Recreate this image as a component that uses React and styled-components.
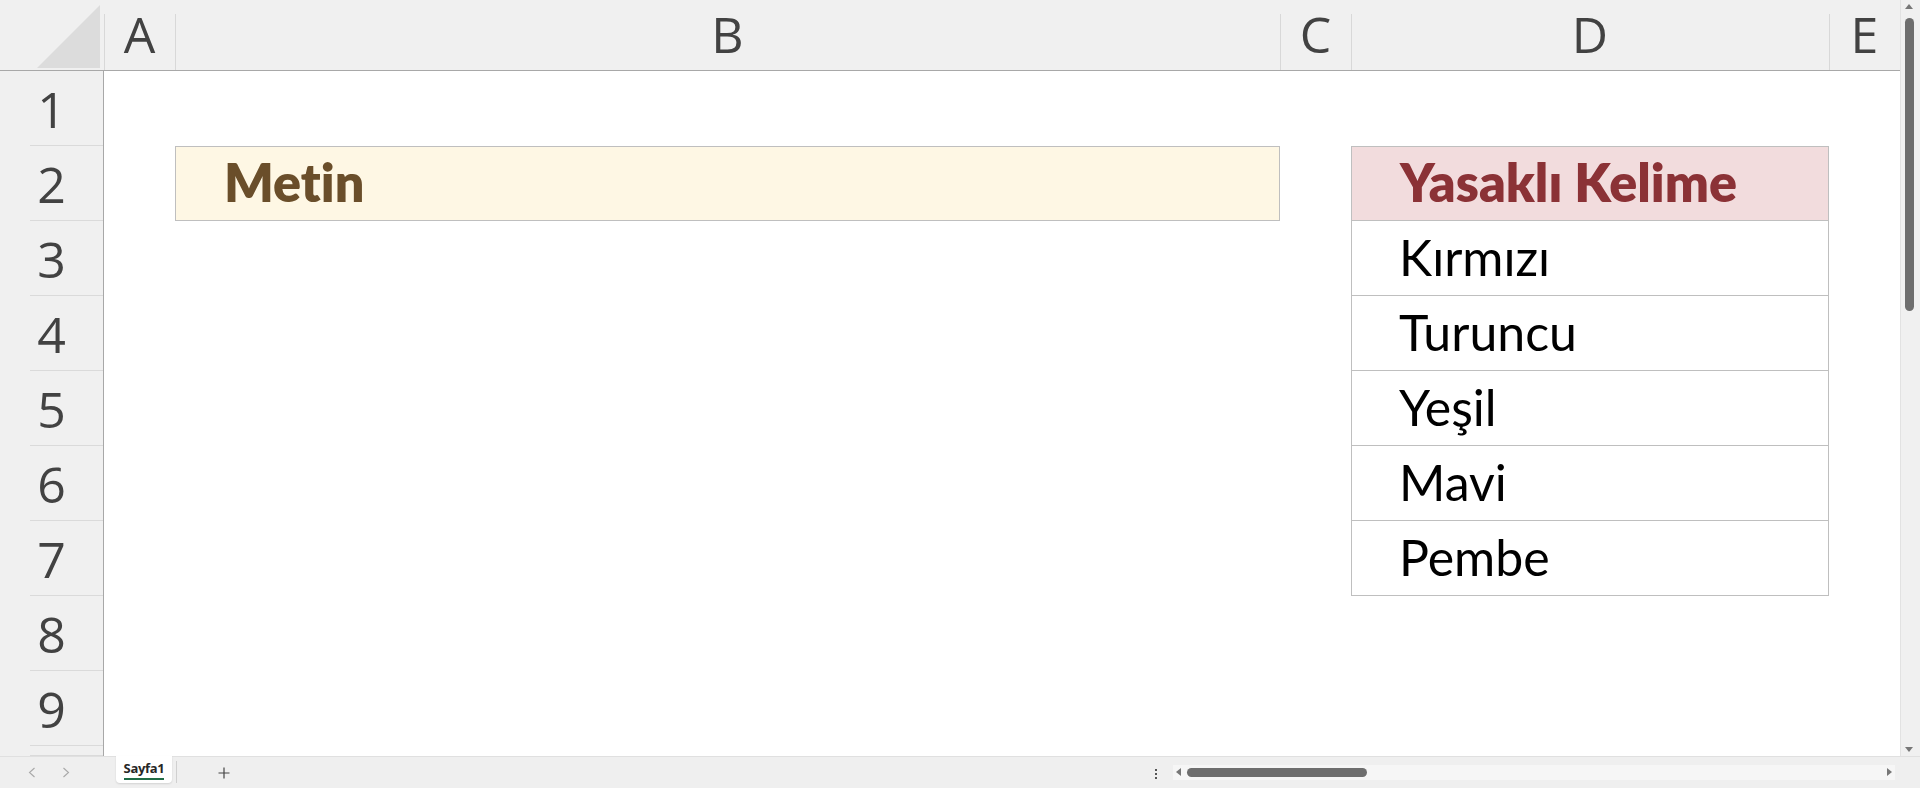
import React from 'react';
import styled, { createGlobalStyle } from 'styled-components';

const GlobalStyle = createGlobalStyle`
  html, body {
    margin: 0;
    padding: 0;
    background: #f0f0f0;
  }
  body {
    width: 1920px;
    height: 788px;
    overflow: hidden;
  }
`;

const Window = styled.div`
  width: 1920px;
  height: 788px;
  display: flex;
  flex-direction: column;
  background: #f0f0f0;
  overflow: hidden;
`;

const Main = styled.div`
  display: flex;
  height: 756px;
`;

const Sheet = styled.div`
  display: grid;
  grid-template-columns: 104px 71px 1105px 71px 478px 71px;
  grid-template-rows: 71px repeat(9, 75px) 10px;
  width: 1900px;
  height: 756px;
  overflow: hidden;
  background: #ffffff;
`;

const Corner = styled.div`
  position: relative;
  background: #f0f0f0;
  border-bottom: 1px solid #a8a8a8;
  box-sizing: border-box;

  &::before {
    content: '';
    position: absolute;
    left: 37px;
    top: 5px;
    width: 63px;
    height: 63px;
    background: #dcdcdc;
    clip-path: polygon(100% 0, 100% 100%, 0 100%);
  }
`;

const ColHeader = styled.div`
  position: relative;
  display: flex;
  align-items: center;
  justify-content: center;
  background: #f0f0f0;
  border-bottom: 1px solid #a8a8a8;
  box-sizing: border-box;
  font-family: 'Open Sans', 'Noto Sans', sans-serif;
  font-size: 50px;
  color: #424242;
  padding-bottom: 2px;

  &::before {
    content: '';
    position: absolute;
    left: 0;
    top: 14px;
    bottom: 0;
    width: 1px;
    background: #d8d8d8;
  }
`;

const RowHeader = styled.div`
  position: relative;
  display: flex;
  align-items: center;
  justify-content: center;
  background: #f0f0f0;
  border-right: 1px solid #a8a8a8;
  box-sizing: border-box;
  font-family: 'Open Sans', 'Noto Sans', sans-serif;
  font-size: 50px;
  color: #424242;

  &::after {
    content: '';
    position: absolute;
    left: 30px;
    right: 0;
    bottom: 0;
    height: 1px;
    background: #dadada;
  }
`;

const Cell = styled.div`
  display: flex;
  align-items: center;
  box-sizing: border-box;
  padding: 0 0 3px ${(p) => (p.$bold ? '48px' : '47px')};
  background: ${(p) => p.$fill || '#ffffff'};
  color: ${(p) => p.$color || '#000000'};
  font-family: Lato, 'Noto Sans', sans-serif;
  font-size: ${(p) => (p.$bold ? '52px' : '50px')};
  font-weight: ${(p) => (p.$bold ? 800 : 400)};
  font-variant-ligatures: none;
  white-space: nowrap;
  border-left: ${(p) => (p.$boxed ? '1px solid #bfbfbf' : 'none')};
  border-right: ${(p) => (p.$boxed ? '1px solid #bfbfbf' : 'none')};
  border-bottom: ${(p) => (p.$boxed ? '1px solid #bfbfbf' : 'none')};
  border-top: ${(p) => (p.$top ? '1px solid #bfbfbf' : 'none')};
`;

const VScroll = styled.div`
  position: relative;
  width: 20px;
  height: 756px;
  background: #f0f0f0;
  border-left: 1px solid #e2e2e2;
  box-sizing: border-box;
`;

const VThumb = styled.div`
  position: absolute;
  left: 4px;
  top: 18px;
  width: 9px;
  height: 293px;
  border-radius: 5px;
  background: #6e6e6e;
`;

const Arrow = styled.div`
  position: absolute;
  width: 0;
  height: 0;
  border-style: solid;
  ${(p) => p.$dir === 'up' && `
    left: 4px; top: 4px;
    border-width: 0 4.5px 5px 4.5px;
    border-color: transparent transparent #777 transparent;
  `}
  ${(p) => p.$dir === 'down' && `
    left: 4px; bottom: 4px;
    border-width: 5px 4.5px 0 4.5px;
    border-color: #777 transparent transparent transparent;
  `}
  ${(p) => p.$dir === 'left' && `
    left: 3px; top: 3px;
    border-width: 4.5px 5px 4.5px 0;
    border-color: transparent #777 transparent transparent;
  `}
  ${(p) => p.$dir === 'right' && `
    right: 3px; top: 3px;
    border-width: 4.5px 0 4.5px 5px;
    border-color: transparent transparent transparent #777;
  `}
`;

const BottomBar = styled.div`
  display: flex;
  align-items: flex-start;
  height: 32px;
  background: #efefef;
  border-top: 1px solid #e0e0e0;
  box-sizing: border-box;
`;

const NavGroup = styled.div`
  display: flex;
  align-items: center;
  gap: 26px;
  width: 116px;
  height: 31px;
  padding-left: 28px;
  box-sizing: border-box;
`;

const SheetTab = styled.div`
  display: flex;
  flex-direction: column;
  align-items: center;
  width: 56px;
  height: 27px;
  margin-top: -1px;
  background: #ffffff;
  border-radius: 0 0 4px 4px;
  box-shadow: 0 1px 2px rgba(0, 0, 0, 0.12);
  box-sizing: border-box;
  padding-top: 3px;
  font-family: 'Open Sans', sans-serif;
  font-size: 13px;
  font-weight: 700;
  letter-spacing: -0.3px;
  color: #262626;
`;

const TabUnderline = styled.div`
  width: 40px;
  height: 2px;
  margin-top: 1px;
  background: #1e6b45;
`;

const TabDivider = styled.div`
  width: 1px;
  height: 22px;
  margin: 4px 0 0 4px;
  background: #d0d0d0;
`;

const AddSheet = styled.div`
  display: flex;
  align-items: center;
  justify-content: center;
  width: 20px;
  height: 31px;
  margin-left: 37px;
`;

const Spacer = styled.div`
  flex: 1;
`;

const MoreDots = styled.div`
  display: flex;
  flex-direction: column;
  gap: 2px;
  margin: 12px 16px 0 0;

  span {
    width: 2px;
    height: 2px;
    background: #555;
  }
`;

const HTrack = styled.div`
  position: relative;
  width: 722px;
  height: 15px;
  margin: 8px 25px 0 0;
  background: #f6f6f6;
`;

const HThumb = styled.div`
  position: absolute;
  left: 14px;
  top: 3px;
  width: 180px;
  height: 9px;
  border-radius: 5px;
  background: #6e6e6e;
`;

const columns = ['A', 'B', 'C', 'D', 'E'];

const words = ['Kırmızı', 'Turuncu', 'Yeşil', 'Mavi', 'Pembe'];

const cellAt = (row, col) => {
  if (row === 2 && col === 'B') {
    return { text: 'Metin', $fill: '#fef7e4', $color: '#6a4e2a', $bold: true, $boxed: true, $top: true };
  }
  if (row === 2 && col === 'D') {
    return { text: 'Yasaklı Kelime', $fill: '#f2dcdd', $color: '#8b3236', $bold: true, $boxed: true, $top: true };
  }
  if (col === 'D' && row >= 3 && row <= 7) {
    return { text: words[row - 3], $boxed: true };
  }
  return { text: '' };
};

const Chevron = ({ flip }) => (
  <svg width="8" height="11" viewBox="0 0 8 11">
    <path
      d={flip ? 'M1.5 1l5 4.5-5 4.5' : 'M6.5 1l-5 4.5 5 4.5'}
      stroke="#a8a8a8"
      strokeWidth="1.1"
      fill="none"
    />
  </svg>
);

const App = () => {
  const rows = [1, 2, 3, 4, 5, 6, 7, 8, 9, 10];

  return (
    <>
      <GlobalStyle />
      <Window>
        <Main>
          <Sheet>
            <Corner />
            {columns.map((c) => (
              <ColHeader key={c}>{c}</ColHeader>
            ))}
            {rows.map((r) => (
              <React.Fragment key={r}>
                <RowHeader>{r < 10 ? r : ''}</RowHeader>
                {columns.map((c) => {
                  const { text, ...style } = cellAt(r, c);
                  return (
                    <Cell key={c} {...style}>
                      {text}
                    </Cell>
                  );
                })}
              </React.Fragment>
            ))}
          </Sheet>
          <VScroll>
            <Arrow $dir="up" />
            <VThumb />
            <Arrow $dir="down" />
          </VScroll>
        </Main>
        <BottomBar>
          <NavGroup>
            <Chevron />
            <Chevron flip />
          </NavGroup>
          <SheetTab>
            Sayfa1
            <TabUnderline />
          </SheetTab>
          <TabDivider />
          <AddSheet>
            <svg width="12" height="12" viewBox="0 0 12 12">
              <path d="M6 0.5v11M0.5 6h11" stroke="#444" strokeWidth="1.2" fill="none" />
            </svg>
          </AddSheet>
          <Spacer />
          <MoreDots>
            <span />
            <span />
            <span />
          </MoreDots>
          <HTrack>
            <Arrow $dir="left" />
            <HThumb />
            <Arrow $dir="right" />
          </HTrack>
        </BottomBar>
      </Window>
    </>
  );
};

export default App;
